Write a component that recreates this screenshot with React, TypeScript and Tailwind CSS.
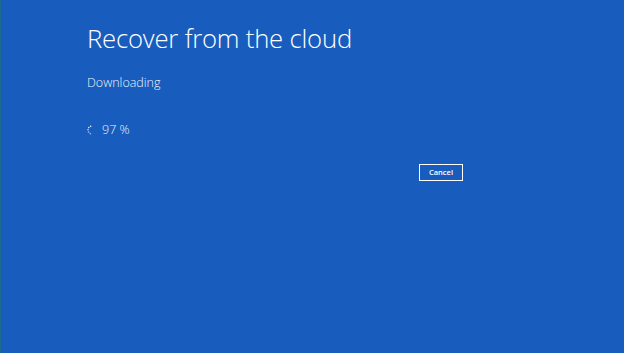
import React from 'react';

const Spinner: React.FC = () => {
  const dots = [0, 1, 2, 3, 4];
  return (
    <svg width="10" height="10" viewBox="0 0 10 10" className="mr-[5px]">
      {dots.map((i) => {
        const a = ((115 + i * 34) * Math.PI) / 180;
        const x = 5 + 4 * Math.cos(a);
        const y = 5 + 4 * Math.sin(a);
        return <circle key={i} cx={x} cy={y} r={0.8} fill="#ffffff" opacity={0.55 + i * 0.1} />;
      })}
    </svg>
  );
};

const App: React.FC = () => {
  return (
    <div
      className="w-[624px] h-[353px] bg-[#185dbd] border-l border-[#1d6a8e] text-white overflow-hidden"
      style={{ fontFamily: '"Open Sans", "Noto Sans", sans-serif' }}
    >
      <div className="pl-[86px] pt-[21px] flex flex-col">
        <h1 className="text-[25.7px] font-light leading-[36px] tracking-[-0.2px]">Recover from the cloud</h1>
        <p className="mt-[17px] text-[12.5px] font-light leading-[18px] text-[#eef2fa]">Downloading</p>
        <div className="mt-[29px] flex items-center text-[12.5px] font-light leading-[18px] text-[#eef2fa]">
          <Spinner />
          <span>97 %</span>
        </div>
        <div className="mt-[25px] pl-[332px]">
          <button className="w-[44px] h-[17px] border border-white text-[7.5px] font-semibold leading-none flex items-center justify-center">
            Cancel
          </button>
        </div>
      </div>
    </div>
  );
};

export default App;
